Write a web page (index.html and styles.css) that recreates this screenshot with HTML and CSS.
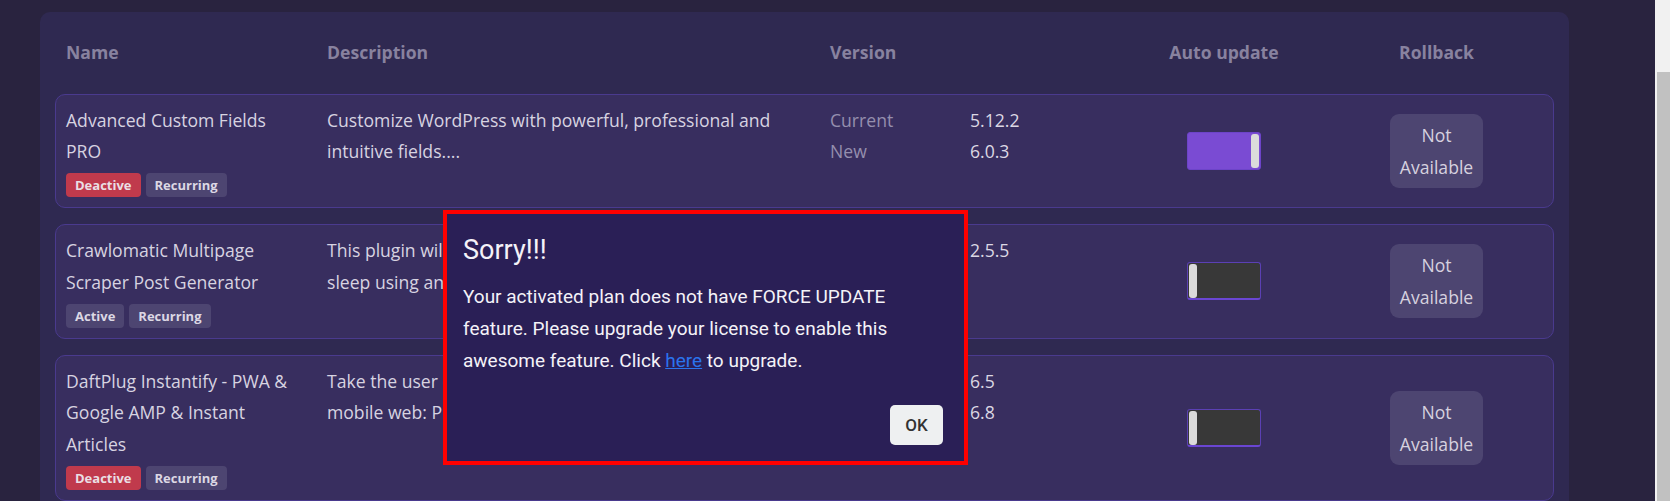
FILE: index.html
```html
<!DOCTYPE html>
<html lang="en">
<head>
<meta charset="utf-8">
<title>Plugins</title>
<link rel="stylesheet" href="styles.css">
</head>
<body>
<div class="page">
  <div class="card">
    <div class="grid head">
      <div class="h">Name</div>
      <div class="h">Description</div>
      <div class="h span2">Version</div>
      <div class="h center">Auto update</div>
      <div class="h center">Rollback</div>
    </div>

    <div class="grid row">
      <div class="name">Advanced Custom Fields PRO
        <div class="badges"><span class="badge red">Deactive</span><span class="badge">Recurring</span></div>
      </div>
      <div class="desc">Customize WordPress with powerful, professional and intuitive fields....</div>
      <div class="vlabel">Current<br>New</div>
      <div class="vval">5.12.2<br>6.0.3</div>
      <div class="cell-c"><span class="toggle on"><span class="knob"></span></span></div>
      <div class="cell-c"><span class="na">Not<br>Available</span></div>
    </div>

    <div class="grid row">
      <div class="name">Crawlomatic Multipage Scraper Post Generator
        <div class="badges"><span class="badge">Active</span><span class="badge">Recurring</span></div>
      </div>
      <div class="desc">This plugin will crawl multiple pages and post it while you sleep using any website.</div>
      <div class="vlabel">Current</div>
      <div class="vval">2.5.5</div>
      <div class="cell-c"><span class="toggle"><span class="knob"></span></span></div>
      <div class="cell-c"><span class="na">Not<br>Available</span></div>
    </div>

    <div class="grid row">
      <div class="name">DaftPlug Instantify - PWA &amp; Google AMP &amp; Instant Articles
        <div class="badges"><span class="badge red">Deactive</span><span class="badge">Recurring</span></div>
      </div>
      <div class="desc">Take the user experience of your site to a new level on mobile web: Progressive Web Apps.</div>
      <div class="vlabel">Current<br>New</div>
      <div class="vval">6.5<br>6.8</div>
      <div class="cell-c"><span class="toggle"><span class="knob"></span></span></div>
      <div class="cell-c"><span class="na">Not<br>Available</span></div>
    </div>
  </div>
</div>

<div class="modal">
  <h2 class="modal-title">Sorry!!!</h2>
  <p class="modal-text">Your activated plan does not have FORCE UPDATE feature. Please upgrade your license to enable this awesome feature. Click <a href="#">here</a> to upgrade.</p>
  <div class="modal-actions"><button class="ok">OK</button></div>
</div>

<div class="scrollbar"><div class="thumb"></div></div>
</body>
</html>
```

FILE: styles.css
```css
html, body {
  margin: 0;
  padding: 0;
  height: 100%;
  overflow: hidden;
}
body {
  background: #29233f;
  font-family: "Open Sans", "Noto Sans", sans-serif;
  color: #d7d3e1;
}
.page {
  padding: 12px 101px 0 40px;
}
.card {
  background: #2f2951;
  border-radius: 10px;
  padding: 15px;
  display: flex;
  flex-direction: column;
  gap: 16px;
}
.grid {
  display: grid;
  grid-template-columns: 261px 503px 140px 148px 212px 1fr;
  font-size: 17.6px;
  line-height: 31.7px;
}
.head {
  padding: 10px 11px 0;
  height: 50.7px;
  box-sizing: border-box;
}
.h {
  font-weight: 700;
  color: #88829f;
}
.span2 { grid-column: span 2; }
.center { text-align: center; }
.row {
  background: #382e5f;
  border: 1px solid #4a3a8e;
  border-radius: 10px;
  padding: 10px;
}
.name {
  padding-right: 25px;
}
.badges {
  display: flex;
  gap: 5px;
  margin-top: 5px;
}
.badge {
  display: inline-block;
  height: 24px;
  line-height: 24px;
  padding: 0 9px;
  border-radius: 4px;
  font-size: 13px;
  font-weight: 700;
  background: #4d4571;
  color: #dcd8e4;
}
.badge.red {
  background: #c03a4c;
  color: #eadfe4;
}
.vlabel { color: #958fae; }
.vval { color: #dcd8e4; }
.cell-c {
  display: flex;
  align-items: center;
  justify-content: center;
}
.toggle {
  position: relative;
  display: block;
  width: 74px;
  height: 38px;
  box-sizing: border-box;
  border-radius: 3px;
  background: #383838;
  border: 1px solid #5b40b4;
  border-bottom: 2px solid #6a46d2;
}
.toggle .knob {
  position: absolute;
  top: 1px;
  left: 1px;
  width: 8px;
  bottom: 0;
  background: #dbdbdb;
  border-radius: 3px;
}
.toggle.on {
  background: #7a4bd3;
  border: 1px solid #6d44c9;
}
.toggle.on .knob {
  left: auto;
  right: 1px;
  bottom: 1px;
}
.na {
  display: block;
  background: #4d4571;
  border-radius: 9px;
  padding: 5px 10px;
  line-height: 32px;
  text-align: center;
  color: #d6d1df;
}

.modal {
  position: fixed;
  left: 443px;
  top: 210px;
  width: 525px;
  height: 255px;
  box-sizing: border-box;
  background: #2a1f56;
  border: 4px solid #ff0000;
  padding: 16px;
  font-family: Roboto, "Liberation Sans", sans-serif;
  color: #f4f2f8;
  display: flex;
  flex-direction: column;
}
.modal-title {
  margin: 0;
  font-size: 27px;
  font-weight: 400;
  line-height: 40px;
}
.modal-text {
  margin: 11px 0 0;
  max-width: 455px;
  font-size: 19px;
  line-height: 32px;
}
.modal-text a {
  color: #2a74ee;
  text-decoration: underline;
}
.modal-actions {
  margin-top: auto;
  display: flex;
  justify-content: flex-end;
  padding-right: 5px;
}
.ok {
  width: 53px;
  height: 40px;
  border: none;
  border-radius: 5px;
  background: #eef0f1;
  color: #333;
  font-family: Roboto, "Liberation Sans", sans-serif;
  font-size: 17px;
  font-weight: 500;
  padding: 0;
}

.scrollbar {
  position: fixed;
  top: 0;
  right: 0;
  width: 15px;
  height: 100%;
  background: #f1f1f1;
}
.thumb {
  position: absolute;
  top: 72px;
  left: 2px;
  right: 0;
  bottom: 0;
  background: #c1c1c1;
}
```
